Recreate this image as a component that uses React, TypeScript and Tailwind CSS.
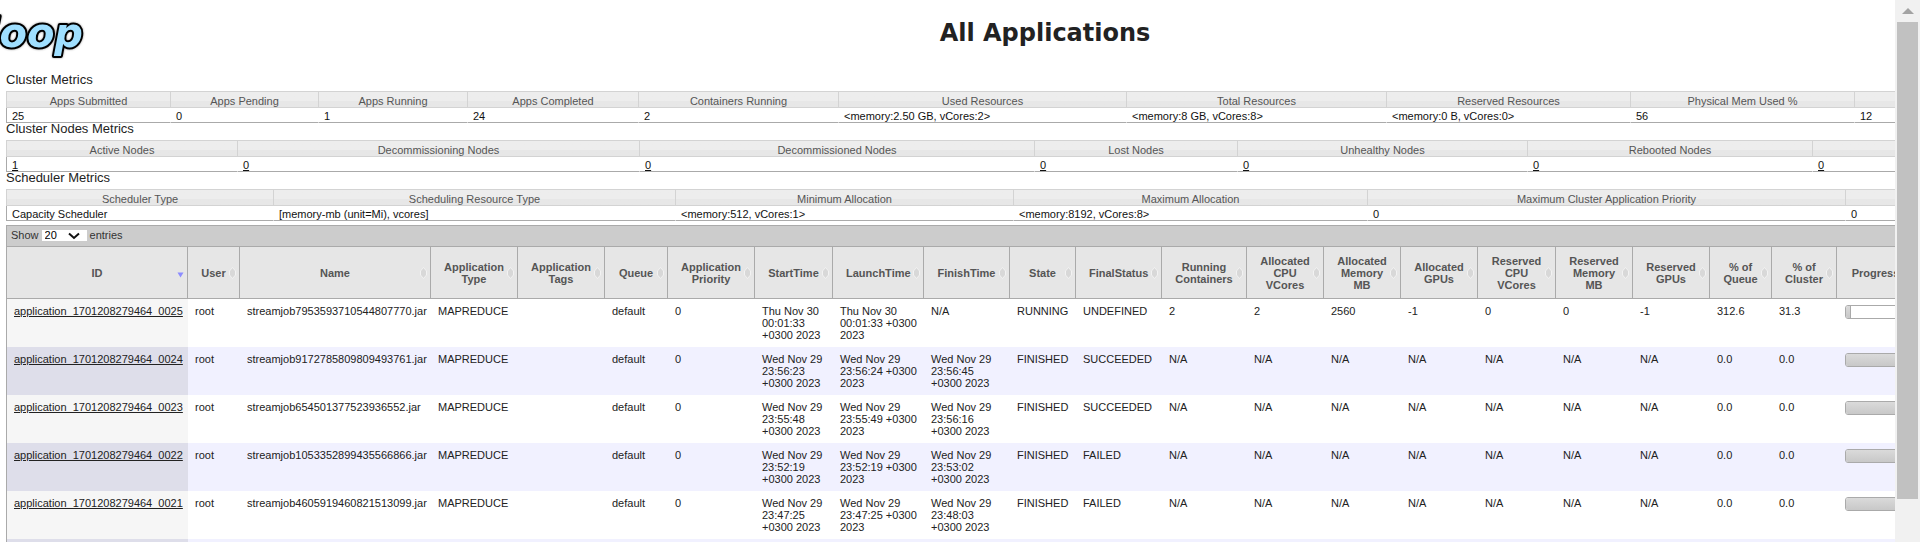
import React from "react";

type Metric = { label: string; value: string; width: string };

const clusterMetrics: Metric[] = [
  { label: "Apps Submitted", value: "25", width: "w-[164px]" },
  { label: "Apps Pending", value: "0", width: "w-[148px]" },
  { label: "Apps Running", value: "1", width: "w-[149px]" },
  { label: "Apps Completed", value: "24", width: "w-[171px]" },
  { label: "Containers Running", value: "2", width: "w-[200px]" },
  { label: "Used Resources", value: "<memory:2.50 GB, vCores:2>", width: "w-[288px]" },
  { label: "Total Resources", value: "<memory:8 GB, vCores:8>", width: "w-[260px]" },
  { label: "Reserved Resources", value: "<memory:0 B, vCores:0>", width: "w-[244px]" },
  { label: "Physical Mem Used %", value: "56", width: "w-[224px]" },
  { label: "", value: "12", width: "" },
];

const nodeMetrics: Metric[] = [
  { label: "Active Nodes", value: "1", width: "w-[231px]" },
  { label: "Decommissioning Nodes", value: "0", width: "w-[402px]" },
  { label: "Decommissioned Nodes", value: "0", width: "w-[395px]" },
  { label: "Lost Nodes", value: "0", width: "w-[203px]" },
  { label: "Unhealthy Nodes", value: "0", width: "w-[290px]" },
  { label: "Rebooted Nodes", value: "0", width: "w-[285px]" },
  { label: "", value: "0", width: "" },
];

const schedulerMetrics: Metric[] = [
  { label: "Scheduler Type", value: "Capacity Scheduler", width: "w-[267px]" },
  { label: "Scheduling Resource Type", value: "[memory-mb (unit=Mi), vcores]", width: "w-[402px]" },
  { label: "Minimum Allocation", value: "<memory:512, vCores:1>", width: "w-[338px]" },
  { label: "Maximum Allocation", value: "<memory:8192, vCores:8>", width: "w-[354px]" },
  { label: "Maximum Cluster Application Priority", value: "0", width: "w-[478px]" },
  { label: "", value: "0", width: "" },
];

const columns = [
  { label: "ID", width: "w-[181px]" },
  { label: "User", width: "w-[52px]" },
  { label: "Name", width: "w-[191px]" },
  { label: "Application Type", width: "w-[87px]" },
  { label: "Application Tags", width: "w-[87px]" },
  { label: "Queue", width: "w-[63px]" },
  { label: "Application Priority", width: "w-[87px]" },
  { label: "StartTime", width: "w-[78px]" },
  { label: "LaunchTime", width: "w-[91px]" },
  { label: "FinishTime", width: "w-[86px]" },
  { label: "State", width: "w-[66px]" },
  { label: "FinalStatus", width: "w-[86px]" },
  { label: "Running Containers", width: "w-[85px]" },
  { label: "Allocated CPU VCores", width: "w-[77px]" },
  { label: "Allocated Memory MB", width: "w-[77px]" },
  { label: "Allocated GPUs", width: "w-[77px]" },
  { label: "Reserved CPU VCores", width: "w-[78px]" },
  { label: "Reserved Memory MB", width: "w-[77px]" },
  { label: "Reserved GPUs", width: "w-[77px]" },
  { label: "% of Queue", width: "w-[62px]" },
  { label: "% of Cluster", width: "w-[65px]" },
  { label: "Progress", width: "w-[78px]" },
];

const NA = "N/A";

const rows = [
  {
    cells: [
      "application_1701208279464_0025", "root", "streamjob7953593710544807770.jar", "MAPREDUCE", "", "default", "0",
      "Thu Nov 30\n00:01:33\n+0300 2023", "Thu Nov 30\n00:01:33 +0300\n2023", NA,
      "RUNNING", "UNDEFINED", "2", "2", "2560", "-1", "0", "0", "-1", "312.6", "31.3",
    ],
    progress: 8,
  },
  {
    cells: [
      "application_1701208279464_0024", "root", "streamjob9172785809809493761.jar", "MAPREDUCE", "", "default", "0",
      "Wed Nov 29\n23:56:23\n+0300 2023", "Wed Nov 29\n23:56:24 +0300\n2023", "Wed Nov 29\n23:56:45\n+0300 2023",
      "FINISHED", "SUCCEEDED", NA, NA, NA, NA, NA, NA, NA, "0.0", "0.0",
    ],
    progress: 100,
  },
  {
    cells: [
      "application_1701208279464_0023", "root", "streamjob654501377523936552.jar", "MAPREDUCE", "", "default", "0",
      "Wed Nov 29\n23:55:48\n+0300 2023", "Wed Nov 29\n23:55:49 +0300\n2023", "Wed Nov 29\n23:56:16\n+0300 2023",
      "FINISHED", "SUCCEEDED", NA, NA, NA, NA, NA, NA, NA, "0.0", "0.0",
    ],
    progress: 100,
  },
  {
    cells: [
      "application_1701208279464_0022", "root", "streamjob1053352899435566866.jar", "MAPREDUCE", "", "default", "0",
      "Wed Nov 29\n23:52:19\n+0300 2023", "Wed Nov 29\n23:52:19 +0300\n2023", "Wed Nov 29\n23:53:02\n+0300 2023",
      "FINISHED", "FAILED", NA, NA, NA, NA, NA, NA, NA, "0.0", "0.0",
    ],
    progress: 100,
  },
  {
    cells: [
      "application_1701208279464_0021", "root", "streamjob4605919460821513099.jar", "MAPREDUCE", "", "default", "0",
      "Wed Nov 29\n23:47:25\n+0300 2023", "Wed Nov 29\n23:47:25 +0300\n2023", "Wed Nov 29\n23:48:03\n+0300 2023",
      "FINISHED", "FAILED", NA, NA, NA, NA, NA, NA, NA, "0.0", "0.0",
    ],
    progress: 100,
  },
];

function Logo() {
  return (
    <svg
      aria-label="Hadoop"
      className="block h-[60px] w-[90px] drop-shadow-[0_0_1px_#999]"
      viewBox="0 0 90 60"
    >
      <text
        x="83"
        y="47"
        textAnchor="end"
        fontFamily="DejaVu Sans, sans-serif"
        fontSize="40"
        fontWeight="700"
        fontStyle="italic"
        fill="#9fdfff"
        stroke="#000"
        strokeWidth="4"
        strokeLinejoin="round"
        paintOrder="stroke"
      >
        doop
      </text>
    </svg>
  );
}

function MetricsTable({ title, metrics, linked = false }: { title: string; metrics: Metric[]; linked?: boolean }) {
  return (
    <section>
      <h2 className="pb-[5px] text-[13px] leading-[12px]">{title}</h2>
      <table aria-label={title} className="w-full table-fixed border-separate border-spacing-0 leading-[12px]">
        <thead>
          <tr>
            {metrics.map((m, i) => (
              <th
                key={i}
                className={`${m.width} border-y border-l border-[#d3d3d3] bg-linear-to-b from-[#ededed] from-60% to-[#e7e7e7] to-60% pt-[3px] text-center font-normal text-[#555]`}
              >
                {m.label}
              </th>
            ))}
          </tr>
        </thead>
        <tbody>
          <tr>
            {metrics.map((m, i) => (
              <td
                key={i}
                className="border-b border-l border-b-[#aaa] border-l-white pt-[2px] pl-[5px] text-[#111] first:border-l-[#aaa]"
              >
                {linked ? (
                  <a href="#nodes" className="underline">
                    {m.value}
                  </a>
                ) : (
                  m.value
                )}
              </td>
            ))}
          </tr>
        </tbody>
      </table>
    </section>
  );
}

function SortIcon({ active }: { active: boolean }) {
  return active ? (
    <svg className="mt-1 h-[6px] w-[7px]" viewBox="0 0 7 6" aria-hidden="true">
      <path d="M0.5 0.5h6L3.5 5.5z" fill="#8c8cff" />
    </svg>
  ) : (
    <svg className="h-[12px] w-[7px]" viewBox="0 0 7 12" aria-hidden="true">
      <path d="M3.5 0.5L6.5 4v4L3.5 11.5L0.5 8V4z" fill="#d8d8d8" stroke="#f2f2f2" strokeWidth="1" />
    </svg>
  );
}

function AppsTable() {
  return (
    <section className="mt-1 border-t border-l border-[#aaa]">
      <div className="flex h-[20px] items-center gap-[3px] bg-[#ccc] pb-[2px] pl-[4px] text-[#333]">
        <label htmlFor="page-size">Show</label>
        <span className="relative flex">
          <select
            id="page-size"
            defaultValue="20"
            className="h-[11px] w-[45px] appearance-none rounded-none bg-white pl-[3px] leading-[11px] text-black"
          >
            <option>20</option>
            <option>40</option>
            <option>60</option>
            <option>80</option>
            <option>100</option>
          </select>
          <svg
            className="pointer-events-none absolute top-[2px] right-[7px] h-[8px] w-[12px]"
            viewBox="0 0 12 8"
            aria-hidden="true"
          >
            <path d="M1 1.5L6 6L11 1.5" fill="none" stroke="#111" strokeWidth="2" />
          </svg>
        </span>
        <span>entries</span>
      </div>
      <table aria-label="Applications" className="w-full table-fixed border-separate border-spacing-0 leading-[12px]">
        <thead>
          <tr>
            {columns.map((c, i) => (
              <th
                key={c.label}
                className={`${c.width} h-[53px] border-y border-r border-[#aaa] bg-[#e6e6e6] p-0 font-bold text-[#555]`}
              >
                <button type="button" className="flex w-full items-center px-px">
                  <span className="w-3 flex-none" />
                  <span className="flex-1">{c.label}</span>
                  <span className="flex w-3 flex-none justify-center">
                    <SortIcon active={i === 0} />
                  </span>
                </button>
              </th>
            ))}
            <th className="border-y border-[#aaa] bg-[#e6e6e6]" />
          </tr>
        </thead>
        <tbody>
          {rows.map((r) => (
            <tr key={r.cells[0]} className="group bg-white even:bg-[#f1f1ff]">
              {r.cells.map((cell, i) => (
                <td
                  key={i}
                  className="h-[48px] py-[6px] pl-[7px] align-top whitespace-pre first:bg-[#f6f6f6] first:group-even:bg-[#dedeea]"
                >
                  {i === 0 ? (
                    <a href="#app" className="underline">
                      {cell}
                    </a>
                  ) : (
                    cell
                  )}
                </td>
              ))}
              <td className="px-[8px] py-[6px] align-top">
                <div
                  role="progressbar"
                  aria-label="Progress"
                  aria-valuenow={r.progress}
                  className="h-[14px] overflow-hidden rounded-[3px] border border-[#aaa] bg-white"
                >
                  <div
                    className="h-full border-r border-[#aaa] bg-linear-to-b from-[#dadada] to-[#c8c8c8]"
                    style={{ width: `${r.progress}%` }}
                  />
                </div>
              </td>
              <td />
            </tr>
          ))}
          <tr className="bg-[#f1f1ff]">
            <td className="h-[48px] bg-[#dedeea]" />
            <td colSpan={22} />
          </tr>
        </tbody>
      </table>
    </section>
  );
}

function ScrollBar() {
  return (
    <aside className="flex w-[25px] flex-none flex-col bg-[#f1f1f1]">
      <button type="button" aria-label="Scroll up" className="flex h-[22px] flex-none items-center justify-center">
        <svg className="h-[6px] w-[12px]" viewBox="0 0 12 6" aria-hidden="true">
          <path d="M6 0L12 6H0z" fill="#a3a3a3" />
        </svg>
      </button>
      <div className="flex-1 px-[2px]">
        <div className="h-11/12 bg-[#c1c1c1]" />
      </div>
    </aside>
  );
}

export default function App() {
  return (
    <div className="flex h-screen overflow-hidden bg-white font-['Liberation_Sans',Arial,sans-serif] text-[11px] text-[#222]">
      <main className="min-w-0 flex-1 overflow-hidden">
        <div className="min-w-[2090px]">
          <header className="grid h-[74px] grid-cols-[1fr_auto_1fr] items-start">
            <Logo />
            <h1 className="pt-[17px] font-['DejaVu_Sans',Verdana,sans-serif] text-[24px] leading-[32px] font-bold">
              All Applications
            </h1>
          </header>
          <div className="pl-[6px]">
            <MetricsTable title="Cluster Metrics" metrics={clusterMetrics} />
            <MetricsTable title="Cluster Nodes Metrics" metrics={nodeMetrics} linked />
            <MetricsTable title="Scheduler Metrics" metrics={schedulerMetrics} />
            <AppsTable />
          </div>
        </div>
      </main>
      <ScrollBar />
    </div>
  );
}
